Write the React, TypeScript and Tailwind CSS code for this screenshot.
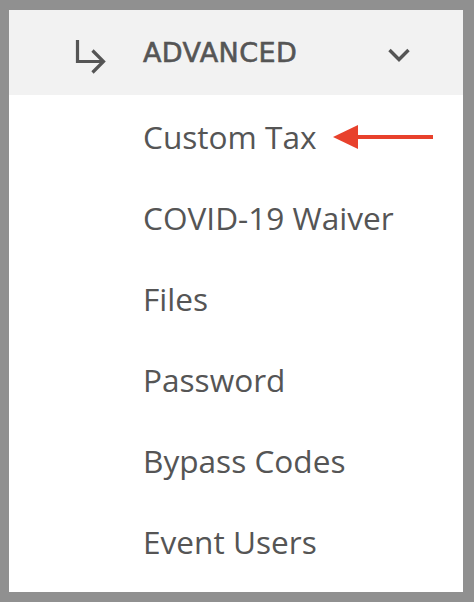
import React from "react";

const items = ["Custom Tax", "COVID-19 Waiver", "Files", "Password", "Bypass Codes", "Event Users"];

export default function App() {
  return (
    <div className="w-[474px] h-[602px] bg-[#909090] pl-[9px] pr-[11px] pt-[10px] pb-[10px]">
      <div className="w-full h-full bg-white flex flex-col">
        <div className="h-[85px] bg-[#f2f2f2] flex items-center relative">
          <svg className="absolute left-[57px] top-[20px]" width="50" height="50" viewBox="0 0 50 50">
            <path d="M11.5 10 V31.5 H37" fill="none" stroke="#555" strokeWidth="3.2" />
            <path d="M26.5 20.5 L37.5 31.5 L26.5 42.5" fill="none" stroke="#555" strokeWidth="3.2" />
          </svg>
          <span
            className="absolute left-[134px] top-[27px] text-[27px] leading-[32px] text-[#555] tracking-[0.4px] [-webkit-text-stroke:0.6px_#555]"
            style={{ fontFamily: '"DejaVu Sans", sans-serif' }}
          >
            ADVANCED
          </span>
          <svg className="absolute left-[378px] top-[37px]" width="26" height="20" viewBox="0 0 26 20">
            <path d="M2.5 3 L12 12.5 L21.5 3" fill="none" stroke="#555" strokeWidth="3.4" />
          </svg>
        </div>
        <div className="flex flex-col pt-[1px]">
          {items.map((t, i) => (
            <div key={t} className="h-[81px] flex items-center pl-[134px] relative">
              <span className="text-[31.6px] text-[#555]" style={{ fontFamily: '"Open Sans", sans-serif' }}>
                {t}
              </span>
              {i === 0 && (
                <svg className="absolute left-[323px] top-[28px]" width="102" height="26" viewBox="0 0 102 26">
                  <path d="M24 11 H101 V15 H24 Z" fill="#e8412c" />
                  <path d="M1 13 L26 1 L26 25 Z" fill="#e8412c" />
                </svg>
              )}
            </div>
          ))}
        </div>
      </div>
    </div>
  );
}
